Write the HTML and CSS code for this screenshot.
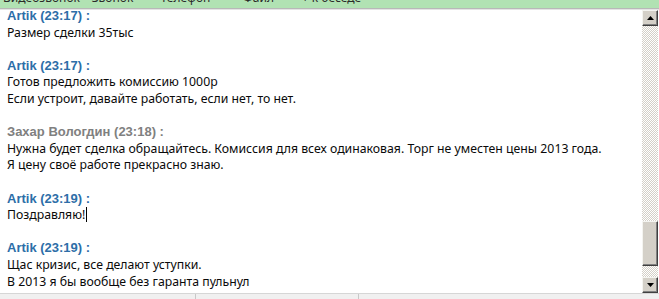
FILE: index.html
```html
<!DOCTYPE html>
<html lang="ru">
<head>
<meta charset="utf-8">
<link rel="stylesheet" href="styles.css">
</head>
<body>
<div class="window">
  <div class="toolbar">
    <div class="tabs">
      <span class="tab">Видеозвонок</span>
      <span class="tab">Звонок</span>
      <span class="tab">Телефон</span>
      <span class="tab">Файл</span>
      <span class="tab">+ к беседе</span>
    </div>
  </div>
  <div class="main">
    <div class="chat">
      <div class="log">
        <div class="msg">
          <div class="who blue">Artik (23:17) :</div>
          <div class="line">Размер сделки 35тыс</div>
        </div>
        <div class="msg">
          <div class="who blue">Artik (23:17) :</div>
          <div class="line">Готов предложить комиссию 1000р</div>
          <div class="line">Если устроит, давайте работать, если нет, то нет.</div>
        </div>
        <div class="msg">
          <div class="who gray">Захар Вологдин (23:18) :</div>
          <div class="line">Нужна будет сделка обращайтесь. Комиссия для всех одинаковая. Торг не уместен цены 2013 года.</div>
          <div class="line">Я цену своё работе прекрасно знаю.</div>
        </div>
        <div class="msg">
          <div class="who blue">Artik (23:19) :</div>
          <div class="line">Поздравляю!<span class="caret"></span></div>
        </div>
        <div class="msg">
          <div class="who blue">Artik (23:19) :</div>
          <div class="line">Щас кризис, все делают уступки.</div>
          <div class="line">В 2013 я бы вообще без гаранта пульнул</div>
        </div>
      </div>
    </div>
    <div class="scrollbar">
      <div class="btn"><svg width="7" height="4" viewBox="0 0 7 4"><path d="M3.5 0 L7 4 L0 4 Z" fill="#000"/></svg></div>
      <div class="track">
        <div class="thumb"></div>
      </div>
      <div class="btn"><svg width="7" height="4" viewBox="0 0 7 4"><path d="M0 0 L7 0 L3.5 4 Z" fill="#000"/></svg></div>
    </div>
  </div>
  <div class="status">
    <div class="cell c1"></div>
    <div class="cell c2"></div>
    <div class="cell c3"></div>
  </div>
</div>
</body>
</html>
```
FILE: styles.css
```css
html, body {
  margin: 0;
  padding: 0;
  background: #fff;
}
.window {
  width: 659px;
  height: 299px;
  display: flex;
  flex-direction: column;
  overflow: hidden;
  font-family: "Noto Sans", "Open Sans", sans-serif;
}
.toolbar {
  height: 8px;
  flex: none;
  background: #b1e2b3;
  border-bottom: 1px solid #b8b8b8;
  box-shadow: 0 1px 0 #e4e4e4;
  overflow: hidden;
}
.tabs {
  display: flex;
  padding-left: 3px;
  margin-top: -10px;
}
.tab {
  width: 73px;
  text-align: center;
  font-size: 12px;
  line-height: 16px;
  color: #2a2a2a;
}
.main {
  flex: 1;
  display: flex;
  min-height: 0;
  margin-top: 1px;
}
.chat {
  flex: 1;
  overflow: hidden;
}
.log {
  margin-top: -2px;
  padding-left: 7px;
  font-size: 12.27px;
  line-height: 16.6px;
  color: #0a0a0a;
  display: flex;
  flex-direction: column;
  gap: 16.6px;
}
.who {
  font-family: "Liberation Sans", Arial, sans-serif;
  font-size: 13px;
  font-weight: bold;
}
.blue { color: #2d6ea8; }
.gray { color: #808080; }
.caret {
  display: inline-block;
  width: 1px;
  height: 15px;
  background: #000;
  vertical-align: -3px;
  margin-left: 1px;
}
.scrollbar {
  width: 16px;
  flex: none;
  margin-right: 1px;
  display: flex;
  flex-direction: column;
}
.btn {
  height: 16px;
  flex: none;
  box-sizing: border-box;
  background: #d4d0c8;
  border-top: 1px solid #f4f4f0;
  border-left: 1px solid #f4f4f0;
  border-right: 1px solid #404040;
  border-bottom: 1px solid #404040;
  box-shadow: inset -1px -1px 0 #808080;
  display: flex;
  align-items: center;
  justify-content: center;
}
.track {
  flex: 1;
  display: flex;
  flex-direction: column;
  justify-content: flex-end;
  padding-bottom: 10px;
  background-color: #fff;
  background-image: repeating-conic-gradient(#d4d0c8 0 25%, #fff 0 50%);
  background-size: 2px 2px;
}
.thumb {
  height: 45px;
  margin-bottom: 1px;
  box-sizing: border-box;
  background: #d4d0c8;
  border-top: 1px solid #f4f4f0;
  border-left: 1px solid #f4f4f0;
  border-right: 1px solid #404040;
  border-bottom: 1px solid #404040;
  box-shadow: inset -1px -1px 0 #808080;
}
.status {
  height: 5px;
  flex: none;
  display: flex;
  background: #f0f0f0;
  border-top: 1px solid #d6d6d6;
}
.cell {
  height: 100%;
}
.c1 { width: 195px; border-right: 1px solid #c8c8c8; }
.c2 { width: 162px; border-right: 1px solid #c8c8c8; }
.c3 { flex: 1; }
```
